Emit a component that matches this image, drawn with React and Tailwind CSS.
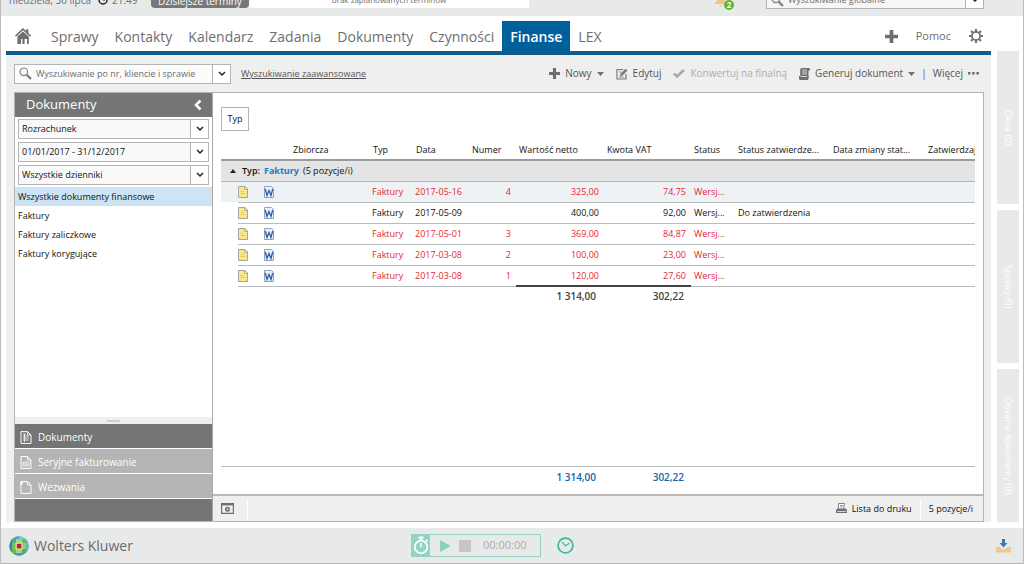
import { useState } from 'react'

const NAV = ['Sprawy', 'Kontakty', 'Kalendarz', 'Zadania', 'Dokumenty', 'Czynności', 'Finanse', 'LEX']
const FOLDERS = ['Wszystkie dokumenty finansowe', 'Faktury', 'Faktury zaliczkowe', 'Faktury korygujące']
const SIDE_TABS = ['Okna (0)', 'Sprawy (0)', 'Otwarte dokumenty (0)']

const INVOICES = [
  { id: 1, date: '2017-05-16', number: '4', net: '325,00', vat: '74,75', draft: true },
  { id: 2, date: '2017-05-09', number: '', net: '400,00', vat: '92,00', draft: false, approval: 'Do zatwierdzenia' },
  { id: 3, date: '2017-05-01', number: '3', net: '369,00', vat: '84,87', draft: true },
  { id: 4, date: '2017-03-08', number: '2', net: '100,00', vat: '23,00', draft: true },
  { id: 5, date: '2017-03-08', number: '1', net: '120,00', vat: '27,60', draft: true },
]

const HEADERS = ['Zbiorcza', 'Typ', 'Data', 'Numer', 'Wartość netto', 'Kwota VAT', 'Status', 'Status zatwierdze...', 'Data zmiany stat...', 'Zatwierdzający']

function Chevron() {
  return (
    <svg width="8" height="6" viewBox="0 0 8 6" fill="none" stroke="#222" strokeWidth="1.5">
      <path d="M1 1l3 3 3-3" />
    </svg>
  )
}

function SearchIcon() {
  return (
    <svg width="13" height="13" viewBox="0 0 13 13" fill="none" stroke="#808080" className="shrink-0">
      <circle cx="4.8" cy="4.8" r="3.8" strokeWidth="1.2" />
      <path d="M7.8 7.8l4.2 4.2" strokeWidth="2.4" />
    </svg>
  )
}

function HomeIcon() {
  return (
    <svg width="16" height="16" viewBox="0 0 16 16" fill="#6e6e6e">
      <path d="M8 0L0 7.6l1 1.1L8 2.2l7 6.5 1-1.1-2.6-2.5V1.2h-2.2V3z" />
      <path d="M8 3.4L2.4 8.6V16H6v-5h1.4v5h2.2v-5H12v5h1.8V8.6z" />
    </svg>
  )
}

function PlusIcon({ size }) {
  return (
    <svg width={size} height={size} viewBox="0 0 12 12" fill="#6e6e6e">
      <path d="M4.3 0h3.4v4.3H12v3.4H7.7V12H4.3V7.7H0V4.3h4.3z" />
    </svg>
  )
}

function GearIcon() {
  return (
    <svg width="14" height="14" viewBox="0 0 14 14" fill="none" stroke="#6e6e6e">
      <circle cx="7" cy="7" r="4.1" strokeWidth="1.7" />
      <path
        strokeWidth="2"
        d="M7 0v2.4M7 11.6V14M0 7h2.4M11.6 7H14M2.05 2.05l1.7 1.7M10.25 10.25l1.7 1.7M11.95 2.05l-1.7 1.7M3.75 10.25l-1.7 1.7"
      />
    </svg>
  )
}

function EditIcon() {
  return (
    <svg width="12" height="12" viewBox="0 0 12 12" fill="none" stroke="#777">
      <path d="M7 1.5H1v9.5h9V6" strokeWidth="1.2" />
      <path d="M4.2 8l.6-2.2L9.6 1l1.5 1.5-4.7 4.8z" fill="#777" strokeWidth=".6" />
      <path d="M3 4h2.4M3 9h4.8" strokeWidth=".8" />
    </svg>
  )
}

function ScrollIcon() {
  return (
    <svg width="11" height="12" viewBox="0 0 11 12" fill="#6e6e6e">
      <path d="M3 0h7c.6 0 1 .5 1 1v1.600H9.500V9.500H1.200V2C1.200.8 2 0 3 0z" />
      <path d="M0 8h9.500v2.500c0 .9-.6 1.500-1.500 1.500H1.500C.6 12 0 11.400 0 10.500z" />
      <path d="M3 2h5M3 4h5M3 6h5M1.500 8.500h6.500" stroke="#efefef" strokeWidth=".8" />
    </svg>
  )
}

function NoteIcon() {
  return (
    <svg width="10" height="12" viewBox="0 0 10 12">
      <path d="M.5.5H7L9.500 3v8.500h-9z" fill="#fbe88c" stroke="#a5a59a" />
      <path d="M6.500.5V3.500h3z" fill="#fff" stroke="#9a9a8e" strokeWidth=".7" />
      <path d="M2.500 5.500h3M2.500 7.500h5" stroke="#e8c95c" />
    </svg>
  )
}

function WordIcon() {
  return (
    <svg width="10" height="12" viewBox="0 0 10 12">
      <path d="M.5.5H7.500L9.500 2.500v9h-9z" fill="#eaf1fa" stroke="#8fa3c0" />
      <path d="M1.300 3l1.700 6.500L5 4.500l2 5L8.700 3" fill="none" stroke="#2f5ca8" strokeWidth="1.300" />
    </svg>
  )
}

function PageIcon({ kind }) {
  return (
    <svg width="12" height="13" viewBox="0 0 12 13" fill="none" stroke="#fff">
      <path d="M1 .6h6.500L11 4v8.400H1z" />
      <path d="M7.500.6V4H11" strokeWidth=".8" />
      {kind === 'lines' && <path d="M3 3h3M3 5h6M3 7h6M3 9h6M4.500 3v8" strokeWidth=".8" />}
      {kind === 'table' && <path d="M3 6h6v4H3zM3 8h6M6 6v4" strokeWidth=".7" />}
      {kind === 'new' && <path d="M0 2h3M1.500.5v3" strokeWidth="1.300" />}
    </svg>
  )
}

function PrinterIcon() {
  return (
    <svg width="11" height="11" viewBox="0 0 11 11">
      <path d="M2.500 5.500V.5h6l-1 5" fill="#fff" stroke="#7a828a" />
      <path d="M4 2.500h3M4 4h2.500" stroke="#7a828a" strokeWidth=".8" />
      <path d="M1 5.500h9l1 2V10H0V7.500z" fill="#68717a" />
      <path d="M1 8.500h9" stroke="#e8e8e8" strokeWidth=".8" />
    </svg>
  )
}

function GlobeLogo() {
  return (
    <svg width="20" height="20" viewBox="0 0 20 20">
      <clipPath id="globe">
        <circle cx="10" cy="10" r="9.700" />
      </clipPath>
      <g clipPath="url(#globe)">
        <rect width="20" height="20" fill="#6cc04a" />
        <path d="M0 0h10v3H0z" fill="#4c9fd0" />
        <path d="M10 0h10v3H10z" fill="#7cc6e6" />
        <path d="M0 3h3v14H0z" fill="#2a86c6" />
        <path d="M17 3h3v14h-3z" fill="#58b0dd" />
        <path d="M0 17h20v3H0z" fill="#3d9cd5" />
        <path d="M3 3h4v4H3zM13 13h4v4h-4z" fill="#52ae62" />
        <path d="M7 3h6v4H7zM7 13h6v4H7z" fill="#a5d86c" />
        <path d="M3 7h4v6H3z" fill="#6fc25a" />
        <path d="M13 7h4v6h-4z" fill="#8fd066" />
        <rect x="6.500" y="6.500" width="7" height="7" fill="#d3ebb4" />
        <rect x="7.800" y="7.800" width="4.600" height="4.600" fill="#c8193c" />
      </g>
    </svg>
  )
}

function SidebarSelect({ label, value }) {
  return (
    <div className="relative">
      <select
        aria-label={label}
        className="block h-5 w-full appearance-none border border-[#b4b4b4] bg-[#f9f9f9] pl-[3px] pr-6 text-[9px] text-[#111]"
      >
        <option>{value}</option>
      </select>
      <span className="pointer-events-none absolute inset-y-px right-px flex w-[18px] items-center justify-center border-l border-[#b4b4b4] bg-white">
        <Chevron />
      </span>
    </div>
  )
}

function Columns() {
  return (
    <colgroup>
      <col className="w-[17px]" />
      <col className="w-[26px]" />
      <col className="w-[26px]" />
      <col className="w-20" />
      <col className="w-[43px]" />
      <col className="w-[56px]" />
      <col className="w-[47px]" />
      <col className="w-[88px]" />
      <col className="w-[87px]" />
      <col className="w-11" />
      <col className="w-[95px]" />
      <col className="w-[95px]" />
      <col />
    </colgroup>
  )
}

function TopBar() {
  return (
    <header className="h-4 shrink-0 overflow-hidden bg-[#e8eaea] text-[10px] text-[#6e6e6e]">
      <div className="-mt-2 flex h-4 items-center pr-[39px] pl-2">
        <span className="w-[89px] whitespace-nowrap">niedziela, 30 lipca</span>
        <svg width="10" height="10" viewBox="0 0 10 10" fill="none" stroke="#222" strokeWidth="1.500">
          <circle cx="5" cy="5" r="4" />
          <path d="M5 2v3h2" strokeWidth="1" />
        </svg>
        <span className="ml-1 w-[39px]">21:49</span>
        <button className="h-[15px] w-[98px] rounded-b-sm bg-[#787878] leading-4 whitespace-nowrap text-white">Dzisiejsze terminy</button>
        <span className="h-4 w-[280px] bg-white text-center text-[8px] leading-4">brak zaplanowanych terminów</span>
        <span className="relative mr-9 ml-auto">
          <svg width="16" height="16" viewBox="0 0 16 16" fill="#f3c481">
            <path d="M3 0h8v9l2 3H0l3-3zM5 13h4l-2 2z" />
          </svg>
          <span className="absolute top-2 left-2.5 flex size-[10px] items-center justify-center rounded-full bg-[#5cb531] text-[8px] font-bold text-white">2</span>
        </span>
        <div className="flex h-[17px] w-[218px] items-center border border-[#b4b4b4] bg-[#f6f6f6] pl-1">
          <SearchIcon />
          <input aria-label="Wyszukiwanie globalne" placeholder="Wyszukiwanie globalne" className="w-0 flex-1 pl-1 text-[9px] placeholder:text-[#6e6e6e]" />
          <button aria-label="Zakres" className="flex h-full w-[18px] items-center justify-center border-l border-[#b4b4b4] bg-white"><Chevron /></button>
        </div>
      </div>
    </header>
  )
}

function MainNav() {
  return (
    <nav className="flex h-[39px] shrink-0 items-end border-b-[4px] border-[#115a8c] pr-2 pl-[9px] text-[14px] text-[#6e6e6e] *:flex *:h-[30px] *:items-center">
      <a href="#start" aria-label="Start" className="mr-3"><HomeIcon /></a>
      {NAV.map((item) => (
        <a key={item} href={`#${item}`} className={`px-2 ${item === 'Finanse' ? 'bg-[#00609c] font-semibold text-white' : ''}`}>
          {item}
        </a>
      ))}
      <button aria-label="Dodaj" className="ml-auto"><PlusIcon size={13} /></button>
      <a href="#pomoc" className="mx-[18px] text-[11px]">Pomoc</a>
      <button aria-label="Ustawienia"><GearIcon /></button>
    </nav>
  )
}

function Toolbar() {
  return (
    <div className="flex h-[37px] shrink-0 items-center pr-[5px] text-[10px] whitespace-nowrap text-[#555]">
      <div className="flex h-5 w-[217px] items-center border border-[#b4b4b4] bg-[#fcfcfc] pl-1">
        <SearchIcon />
        <input
          aria-label="Wyszukiwanie"
          placeholder="Wyszukiwanie po nr, kliencie i sprawie"
          className="w-0 flex-1 pl-1 text-[9px] placeholder:text-[#6e6e6e]"
        />
        <button aria-label="Rozwiń" className="flex h-full w-[18px] items-center justify-center border-l border-[#b4b4b4] bg-white"><Chevron /></button>
      </div>
      <a href="#zaawansowane" className="ml-[10px] text-[9px] underline">Wyszukiwanie zaawansowane</a>
      <button className="ml-auto flex items-center gap-[5px]">
        <PlusIcon size={11} />
        Nowy
        <svg width="7" height="4" viewBox="0 0 7 4" fill="#6e6e6e"><path d="M0 0h7L3.500 4z" /></svg>
      </button>
      <button className="ml-3 flex items-center gap-[5px]"><EditIcon />Edytuj</button>
      <button disabled className="ml-3 flex items-center gap-[5px] text-[#adadad]">
        <svg width="12" height="9" viewBox="0 0 12 9" fill="none" stroke="#a9a9a9" strokeWidth="2.500"><path d="M1 4.500l3 3L11 1" /></svg>
        Konwertuj na finalną
      </button>
      <button className="ml-3 flex items-center gap-[5px]">
        <ScrollIcon />
        Generuj dokument
        <svg width="7" height="4" viewBox="0 0 7 4" fill="#6e6e6e"><path d="M0 0h7L3.500 4z" /></svg>
      </button>
      <span className="mx-[6px]">|</span>
      <button className="flex items-center gap-[5px]">
        Więcej
        <svg width="11" height="3" viewBox="0 0 11 3" fill="#6e6e6e"><path d="M0 0h2.500v2.500H0zM4.200 0h2.500v2.500H4.200zM8.400 0h2.500v2.500H8.400z" /></svg>
      </button>
    </div>
  )
}

function Sidebar() {
  const [folder, setFolder] = useState(FOLDERS[0])

  return (
    <aside className="flex w-[197px] shrink-0 flex-col">
      <div className="flex h-6 items-center justify-between bg-[#757575] pr-[10px] pl-[11px] text-[13px] text-white">
        <h2>Dokumenty</h2>
        <button aria-label="Zwiń">
          <svg width="8" height="12" viewBox="0 0 8 12" fill="none" stroke="#fff" strokeWidth="2.500"><path d="M6.500 1.500L2 6l4.500 4.500" /></svg>
        </button>
      </div>
      <div className="flex flex-col gap-[3px] px-[3px] py-[2px]">
        <SidebarSelect label="Widok" value="Rozrachunek" />
        <SidebarSelect label="Okres" value="01/01/2017 - 31/12/2017" />
        <SidebarSelect label="Dziennik" value="Wszystkie dzienniki" />
      </div>
      <ul className="flex-1 text-[9px] text-[#111]">
        {FOLDERS.map((name) => (
          <li key={name}>
            <button
              onClick={() => setFolder(name)}
              className={`flex h-[19px] w-full items-center pl-[3px] ${folder === name ? 'bg-[#cce4f5]' : ''}`}
            >
              {name}
            </button>
          </li>
        ))}
      </ul>
      <div className="flex h-[7px] items-center justify-center bg-[#efefef]">
        <span className="h-0.5 w-[13px] bg-[#cfcfcf]" />
      </div>
      <div className="flex flex-col bg-[#757575] pb-[22px] text-[10px] text-white *:flex *:h-[25px] *:items-center *:gap-[6px] *:border-b *:border-white *:pt-[3px] *:pl-[5px]">
        <button><PageIcon kind="lines" />Dokumenty</button>
        <button className="bg-[#b5b5b5]"><PageIcon kind="table" />Seryjne fakturowanie</button>
        <button className="bg-[#b5b5b5]"><PageIcon kind="new" />Wezwania</button>
      </div>
    </aside>
  )
}

function InvoiceTable() {
  return (
    <table className="w-full table-fixed border-collapse text-[9px] text-[#111]">
      <Columns />
      <thead>
        <tr className="h-5 border-b-2 border-[#999c9c]">
          <td colSpan={3} />
          {HEADERS.map((h) => (
            <th key={h} scope="col" className="overflow-hidden p-0 pl-[3px] text-left font-normal whitespace-nowrap">{h}</th>
          ))}
        </tr>
      </thead>
      <tbody>
        <tr className="h-[21px] border-b border-[#b4b4b4] bg-[#e4e4e4]">
          <td colSpan={13} className="p-0">
            <button className="flex items-center pl-[9px] whitespace-nowrap">
              <svg width="6" height="4" viewBox="0 0 6 4" fill="#222" className="mr-[6px]"><path d="M0 4h6L3 0z" /></svg>
              <span className="font-semibold">Typ:</span>
              <span className="mx-1 font-bold text-[#1b78c8]">Faktury</span>
              (5 pozycje/i)
            </button>
          </td>
        </tr>
        {INVOICES.map((inv) => (
          <tr key={inv.id} className={`h-[21px] *:p-0 *:whitespace-nowrap *:not-first:border-b *:not-first:border-[#b9bcbc] ${inv.id === 1 ? 'bg-[#eff2f5]' : ''} ${inv.draft ? 'text-[#e6262f]' : ''}`}>
            <td />
            <td><NoteIcon /></td>
            <td><WordIcon /></td>
            <td />
            <td><span className="pl-[2px]">Faktury</span></td>
            <td><span className="pl-[2px]">{inv.date}</span></td>
            <td className="text-right"><span className="pr-[5px]">{inv.number}</span></td>
            <td className="text-right"><span className="pr-[5px]">{inv.net}</span></td>
            <td className="text-right"><span className="pr-[5px]">{inv.vat}</span></td>
            <td><span className="pl-[3px]">Wersj...</span></td>
            <td><span className="pl-[3px]">{inv.approval}</span></td>
            <td />
            <td />
          </tr>
        ))}
      </tbody>
      <tfoot>
        <tr className="h-5 text-right text-[10px] font-semibold text-[#444]">
          <td colSpan={7} />
          <td className="border-t-2 border-[#444] p-0 pr-2">1 314,00</td>
          <td className="border-t-2 border-[#444] p-0 pr-[7px]">302,22</td>
          <td colSpan={4} />
        </tr>
      </tfoot>
    </table>
  )
}

function GrandTotal() {
  return (
    <table className="w-full table-fixed border-collapse border-t border-[#b9bcbc] text-[10px] font-semibold text-[#1266a8]">
      <Columns />
      <tbody>
        <tr className="h-[23px] text-right">
          <td colSpan={7} />
          <td className="p-0 pr-2">1 314,00</td>
          <td className="p-0 pr-[7px]">302,22</td>
          <td colSpan={4} />
        </tr>
      </tbody>
    </table>
  )
}

function StatusBar() {
  return (
    <div className="flex h-[27px] items-center border-t-2 border-[#b9b9b9] bg-[#efefef] pr-[10px] pl-2 text-[9px] text-[#111]">
      <button aria-label="Ustawienia widoku">
        <svg width="13" height="11" viewBox="0 0 13 11" fill="none" stroke="#6e6e6e">
          <path d="M.6.6h11.800v9.800H.6z" strokeWidth="1.200" />
          <path d="M0 1.200h13" strokeWidth="2.400" />
          <circle cx="6.500" cy="6.200" r="1.700" strokeWidth="1.600" />
        </svg>
      </button>
      <span className="ml-[13px] h-5 w-px bg-white" />
      <button className="ml-auto flex items-center gap-[5px]"><PrinterIcon />Lista do druku</button>
      <span className="mx-2 h-5 w-px bg-white" />
      <span>5 pozycje/i</span>
    </div>
  )
}

function Footer() {
  return (
    <footer className="grid h-9 shrink-0 grid-cols-[402px_1fr_auto] items-center border-b border-[#b4b4b4] bg-[#e8eaea] pr-3 pl-2">
      <div className="flex items-center gap-[5px] text-[14px] text-[#6a6a6a]"><GlobeLogo />Wolters Kluwer</div>
      <div className="flex items-center">
        <div className="flex h-[23px] w-[130px] items-center border border-[#93d3c4]">
          <button aria-label="Stoper" className="flex h-full w-[18px] items-center justify-center bg-[#93d3c4]">
            <svg width="16" height="19" viewBox="0 0 16 19" fill="none" stroke="#fff">
              <circle cx="8" cy="11" r="6.300" strokeWidth="1.800" />
              <path d="M5.500 1.500h5M8 1.500V4M13 4l1.500 1.500" strokeWidth="2" />
              <path d="M8 7v4.500" strokeWidth="1.400" />
            </svg>
          </button>
          <button aria-label="Start" className="ml-[10px]">
            <svg width="11" height="12" viewBox="0 0 11 12" fill="#86d3c0"><path d="M0 0l11 6-11 6z" /></svg>
          </button>
          <button aria-label="Stop" className="ml-2 size-3 bg-[#c6c6c6]" />
          <span className="ml-3 text-[11px] text-[#ababab]">00:00:00</span>
        </div>
        <button aria-label="Czas pracy" className="ml-4">
          <svg width="17" height="17" viewBox="0 0 17 17" fill="none" stroke="#3bb59a" strokeWidth="1.700">
            <circle cx="8.500" cy="8.500" r="7.400" />
            <path d="M5 4.800l3.500 4 4-2.500" strokeWidth="1.200" />
          </svg>
        </button>
      </div>
      <button aria-label="Pobrane">
        <svg width="15" height="14" viewBox="0 0 15 14">
          <path d="M0 8h4l1.500 2h4L11 8h4v5.500H0z" fill="#eccb8e" />
          <path d="M6 0h3v4h2.500L7.500 8.500 3.500 4H6z" fill="#3d74b5" />
        </svg>
      </button>
    </footer>
  )
}

export default function App() {
  return (
    <div className="flex min-h-screen flex-col border-x border-[#bdbdbd] bg-white font-['Open_Sans','Noto_Sans',sans-serif]">
      <TopBar />
      <div className="flex flex-1 gap-[6px] pr-1 pb-[6px] pl-[5px]">
        <div className="flex min-w-0 flex-1 flex-col">
          <MainNav />
          <div className="flex flex-1 flex-col bg-[#efefef] pr-[7px] pl-2">
            <Toolbar />
            <div className="flex flex-1 border border-[#b4b4b4] bg-white">
              <Sidebar />
              <main className="flex min-w-0 flex-1 flex-col border-l border-[#a8a8a8]">
                <div className="flex flex-1 flex-col px-2 pt-[14px] pb-[5px]">
                  <button className="mb-[9px] h-6 w-7 border border-[#b4b4b4] text-[9px] text-[#111]">Typ</button>
                  <InvoiceTable />
                  <div className="mt-auto"><GrandTotal /></div>
                </div>
                <StatusBar />
              </main>
            </div>
          </div>
        </div>
        <div className="flex w-[22px] flex-col gap-[6px] pt-[35px]">
          {SIDE_TABS.map((tab) => (
            <button key={tab} className="flex flex-1 basis-0 items-center justify-center bg-[#e8eaea] text-[9px] whitespace-nowrap text-white [writing-mode:vertical-rl]">
              {tab}
            </button>
          ))}
        </div>
      </div>
      <Footer />
    </div>
  )
}
